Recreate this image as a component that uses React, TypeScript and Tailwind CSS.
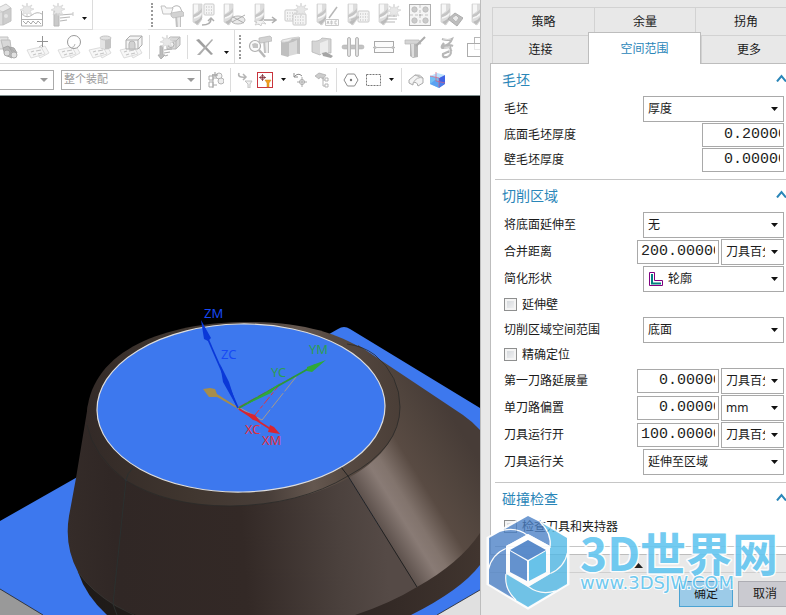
import { useState, type ReactNode } from "react";

const FONT = "font-['Noto_Sans','Noto_Sans_CJK_SC',sans-serif]";

/* ---------- toolbar drawing parts ---------- */

function Mill({ x = 0 }: { x?: number }) {
  return (
    <g transform={`translate(${x} 0)`}>
      <path d="M2 1h9v15l-4 6-5-3z" fill="#cfcfcf" />
      <path d="M3 1h4v7l-4 3z" fill="#f4f4f4" />
      <path d="M11 5v4q-3 4-9 6v-3q6-2 9-7z" fill="#adadad" />
      <path d="M11 12v4l-5 6-3-3q6-2 8-7z" fill="#9f9f9f" />
      <path d="M3 15q5-1 8-5" stroke="#f4f4f4" strokeWidth="1.500" fill="none" />
      <path d="M2 1h9v14M2 1v18l5 3 4-6" stroke="#bdbdbd" strokeWidth=".7" fill="none" />
    </g>
  );
}

function Burst({ x = 0, y = 0 }: { x?: number; y?: number }) {
  return (
    <path
      transform={`translate(${x} ${y})`}
      d="M6 0l1 4 4-2-2 3 4 1-4 2 2 4-4-2-1 3-1-3-4 2 2-4-4-1 4-2-2-3 4 2z"
      fill="#dedede"
      stroke="#bcbcbc"
      strokeWidth=".6"
    />
  );
}

function Cards() {
  return (
    <g stroke="#c4c4c4" strokeWidth=".8">
      <path d="M9 15l10-4 4 7-9 5z" fill="#f2f2f2" />
      <path d="M1 15l14-3 4 7-14 4z" fill="#f4f4f4" />
      <path d="M5 17l3-1M10 16l5-1M7 20l3-1M12 19l4-1" stroke="#adadad" strokeWidth="1.2" />
      <path d="M17 9q-2 2-4 3" stroke="#999" fill="none" />
    </g>
  );
}

function Hammer({ x = 0, y = 0 }: { x?: number; y?: number }) {
  return (
    <g transform={`translate(${x} ${y})`}>
      <path d="M4 4h6v13H5z" fill="#a8a8a8" />
      <path d="M6 4h3v13H7z" fill="#e2e2e2" />
      <path d="M0 2l11-2 2 2v3L2 7 0 5z" fill="#c0c0c0" stroke="#999" strokeWidth=".7" />
    </g>
  );
}

function Calc({ x = 0, y = 0, w = 10, h = 11 }: { x?: number; y?: number; w?: number; h?: number }) {
  return (
    <g transform={`translate(${x} ${y})`}>
      <rect width={w} height={h} rx="1" fill="#f0f0f0" stroke="#b5b5b5" />
      <path d={`M2 3h${w - 3}M2 6h${w - 3}M2 9h${w - 3}`} stroke="#999" strokeDasharray="1 1.500" />
    </g>
  );
}

const glyphs: Record<string, ReactNode> = {
  box: (
    <>
      <path d="M8 6l10-5 5 4-8 4z" fill="#e2e2e2" stroke="#b5b5b5" />
      <path d="M6 9h9v13H6z" fill="#cfcfcf" stroke="#b3b3b3" />
      <path d="M15 9l8-4v13l-8 4z" fill="#b8b8b8" stroke="#a8a8a8" />
      <circle cx="18" cy="13" r="2" fill="#d9d9d9" />
    </>
  ),
  wave: (
    <>
      <path d="M1.5 8v15h21V8M1 16.500h22" fill="none" stroke="#8f8f8f" />
      <path d="M2 11q5 5 10 1t10-1" fill="none" stroke="#999" />
      <path d="M3 18l3 3 2-3 3 3 2-3 3 3 2-3 3 3" fill="none" stroke="#858585" />
      <Burst x={1} y={0} />
    </>
  ),
  comb: (
    <>
      <path d="M3 8h5v15H3z" fill="#b5b5b5" stroke="#999" />
      <path d="M9 12l13-1M9 15l10-1M9 18l7-1" stroke="#999" strokeWidth="1.200" />
      <Burst x={1} y={0} />
      <path d="M22 9v4" stroke="#b2b2b2" />
    </>
  ),
  hammer: (
    <>
      <path d="M1 3h4l1 2h7l-2 6H3z" fill="#f4f4f4" stroke="#aaa" />
      <path d="M12 5q4-4 8-1l3 7" fill="none" stroke="#999" />
      <Hammer x={11} y={8} />
    </>
  ),
  millcalc: (
    <>
      <Mill />
      <Calc x={13} y={1} />
      <path d="M11 22q9 0 9-6m-3 2l3-3 3 3" fill="none" stroke="#8c8c8c" strokeWidth="1.500" />
    </>
  ),
  millplane: (
    <>
      <Mill />
      <ellipse cx="16" cy="17" rx="7" ry="4" fill="#e1e1e1" stroke="#999" />
      <path d="M10 19l13-7M11 14l11 6" stroke="#8c8c8c" />
    </>
  ),
  millarrow: (
    <>
      <Mill />
      <path d="M11 17h12m-4-3l4 3-4 3" fill="none" stroke="#8e8e8e" strokeWidth="1.500" />
      <path d="M1 18l3 1-2 3 4-1 2 2 1-3 4 1-3-3" fill="#eee" stroke="#aaa" strokeWidth=".7" />
    </>
  ),
  calcs: (
    <>
      <Calc x={1} y={7} w={12} h={11} />
      <Calc x={9} y={11} w={13} h={11} />
      <Burst x={11} y={0} />
    </>
  ),
  millabc: (
    <>
      <Mill />
      <path d="M22 4l-8 11" stroke="#999" strokeWidth="1.500" />
      <path d="M10.500 16.500h13v6h-13z" fill="#fafafa" stroke="#b5b5b5" />
      <path d="M12 21l1-3 1 3M16 18h1v3h-1zM22 18h-2v3h2" fill="none" stroke="#999" strokeWidth=".8" />
    </>
  ),
  milltable: (
    <>
      <Mill />
      <Calc x={12} y={8} w={11} h={11} />
      <path d="M5 17l8-3" stroke="#aaa" strokeWidth="2" />
    </>
  ),
  millburst: (
    <>
      <Mill />
      <Burst x={11} y={1} />
      <path d="M10 13h10M9 16h11M8 19h10" stroke="#999" />
    </>
  ),
  holes: (
    <>
      <rect x="1.500" y="1.500" width="21" height="21" fill="#f2f2f2" stroke="#8e8e8e" />
      {[6.500, 17.500].map((cx) =>
        [6.500, 17.500].map((cy) => <circle key={`${cx}-${cy}`} cx={cx} cy={cy} r="2.700" fill="#b4b4b4" stroke="#999" strokeWidth=".7" />)
      )}
      <path d="M12 2v20M2 12h20" stroke="#aaa" strokeDasharray="3 2" />
      <circle cx="12" cy="12" r="1" fill="#999" />
    </>
  ),
  milldiamond: (
    <>
      <Mill />
      <path d="M9 16l7-6 8 5-6 8z" fill="#a2a2a2" stroke="#8a8a8a" />
      <path d="M13 15l4-3 3 3-3 4z" fill="#e1e1e1" stroke="#999" />
    </>
  ),
  mill: <Mill />,
  binoc: (
    <>
      <path d="M4 2h10v12H4z" fill="#d9d9d9" stroke="#a8a8a8" />
      <path d="M7 5h9l1 8h-8z" fill="#c8c8c8" stroke="#a2a2a2" />
      <path d="M9 13l5-2 8 7-4 5-7-3zM15 12l5 1 3 5-3 2z" fill="#999" stroke="#808080" />
      <circle cx="13" cy="18" r="3" fill="#ccc" stroke="#8a8a8a" />
      <circle cx="20" cy="20" r="3" fill="#d5d5d5" stroke="#8a8a8a" />
    </>
  ),
  cardplus: (
    <>
      <Cards />
      <path d="M16.500 1v11M11 6.500h11" stroke="#666" />
    </>
  ),
  cardcircle: (
    <>
      <Cards />
      <circle cx="17" cy="7" r="6.500" fill="#fff" stroke="#6e6e6e" />
      <path d="M18 9q0 3-4 4" fill="none" stroke="#999" />
    </>
  ),
  cardcyl: (
    <>
      <Cards />
      <path d="M12 3v10q5 3 11 0V3z" fill="#aaa" />
      <path d="M12 3h5v11l-5-1z" fill="#dadada" />
      <ellipse cx="17.500" cy="3" rx="5.500" ry="2" fill="#d5d5d5" stroke="#aaa" />
    </>
  ),
  cardbox: (
    <>
      <Cards />
      <path d="M7 5l4-4h12v9l-4 4H7z" fill="#eee" stroke="#8a8a8a" />
      <path d="M7 5h12v9M19 5l4-4" fill="none" stroke="#8a8a8a" />
      <path d="M10 9q0-3 3-3t3 3v5h-6z" fill="#c0c0c0" stroke="#999" />
    </>
  ),
  clamp: (
    <>
      <path d="M10 6l3-4h10v8l-4 4h-9z" fill="#cacaca" stroke="#999" />
      <path d="M10 6h9l4-4M19 6v8" fill="none" stroke="#999" />
      <circle cx="14" cy="9.500" r="3" fill="#ececec" stroke="#8a8a8a" />
      <path d="M3 11h3v9h2l-4 4-3-4h2z" fill="#a2a2a2" stroke="#8f8f8f" />
      <path d="M7 15l8-1M7 18l6-1M8 21l3-1" stroke="#8f8f8f" strokeWidth="1.200" />
      <Burst x={4} y={0} />
    </>
  ),
  cross: (
    <>
      <path d="M3 5l3-1 14 15-2 1z" fill="#777" />
      <path d="M19 4l1 1L7 20H4z" fill="#8c8c8c" />
    </>
  ),
  findhammer: (
    <>
      <Hammer x={11} y={1} />
      <circle cx="7" cy="11" r="5.500" fill="#f8f8f8" stroke="#8e8e8e" strokeWidth="1.200" />
      <path d="M4 9l3-1 3 1v4H5z" fill="#aaa" />
      <path d="M11 15l6 7" stroke="#999" strokeWidth="2.500" />
    </>
  ),
  block: (
    <>
      <path d="M2 7q8 1 11-3l8-1v16q-9-1-12 3l-7-2z" fill="#a5a5a5" />
      <path d="M2 7q8 1 11-3l8-1-1-1-8 1-9 2z" fill="#e2e2e2" stroke="#999" strokeWidth=".6" />
      <path d="M10 8q5-1 8-3v14l-8 2z" fill="#cacaca" />
    </>
  ),
  blockmill: (
    <>
      <path d="M2 6q7 1 10-3l9 1v14q-9-1-11 2l-8-3z" fill="#c4c4c4" stroke="#999" strokeWidth=".8" />
      <path d="M10 8l8-3v13l-8 1z" fill="#e4e4e4" />
      <path d="M12 18l4-1 7 4-2 2-8-2z" fill="#808080" />
    </>
  ),
  gates: (
    <>
      <rect x="1" y="10" width="22" height="4" rx="2" fill="#aaa" stroke="#8a8a8a" strokeWidth=".5" />
      <rect x="6.500" y="2.500" width="3" height="19" rx="1.500" fill="#d2d2d2" stroke="#999" />
      <rect x="14.500" y="2.500" width="3" height="19" rx="1.500" fill="#d2d2d2" stroke="#999" />
    </>
  ),
  slot: (
    <>
      <rect x="2.500" y="6.500" width="19" height="11" fill="#fafafa" stroke="#858585" />
      <path d="M1 12.500h22" stroke="#999" />
      <circle cx="3" cy="12.500" r="1.500" fill="#a4a4a4" />
      <circle cx="21" cy="12.500" r="1.500" fill="#a4a4a4" />
    </>
  ),
  toolpen: (
    <>
      <path d="M2 5h14l2 4H2z" fill="#c4c4c4" stroke="#999" strokeWidth=".7" />
      <path d="M7 9h8v13l-5 1-3-2z" fill="#999" />
      <path d="M8 9h3v13H9z" fill="#cfcfcf" />
      <path d="M22 2l-9 9" stroke="#888" strokeWidth="2" />
    </>
  ),
  squiggle: (
    <>
      <path d="M8 4q6 2 10 0-2 6-9 7 6-2 10 0M10 8q-4 5-1 5l7-1q3 8-3 10-5 1-4-3l9-4" fill="none" stroke="#999" strokeWidth="2.200" />
      <path d="M9 4q5 1 8 0M10 13l6-1M15 14q2 5-2 7" fill="none" stroke="#ddd" strokeWidth=".8" />
    </>
  ),
  squares: (
    <>
      <rect x="9.500" y="2.500" width="15" height="12" fill="#fff" stroke="#999" />
      <rect x="2.500" y="8.500" width="13" height="13" fill="#fff" fillOpacity=".7" stroke="#8a8a8a" />
    </>
  ),
};

const smallGlyphs: Record<string, ReactNode> = {
  assembly: (
    <>
      <path d="M1 4h4v4H1zM1 10h4v5H1zM5 2v14M5 6h5M5 13h4" fill="none" stroke="#aaa" />
      <circle cx="11" cy="4" r="3" fill="#f4f4f4" stroke="#b5b5b5" />
      <circle cx="13" cy="9" r="3" fill="#eee" stroke="#b5b5b5" />
      <path d="M7 0v5M4 3h6" stroke="#999" />
    </>
  ),
  unfilter: (
    <>
      <path d="M2 1q-2 5 7 4M6 2l3 3-3 3" fill="none" stroke="#b5b5b5" strokeWidth="1.500" />
      <path d="M8 9h7l-2 3v4h-2v-4z" fill="#f1f1f1" stroke="#c2c2c2" />
    </>
  ),
  redfilter: (
    <>
      <rect x=".5" y=".5" width="15" height="15" fill="#fff" stroke="#c9333c" />
      <circle cx="5.500" cy="5.500" r="2" fill="none" stroke="#822d38" strokeWidth=".8" />
      <path d="M5.500 2v7M2 5.500h7" stroke="#822d38" strokeWidth=".8" />
      <path d="M8 8h6l-2 3v4h-2v-4z" fill="#f4a01c" stroke="#c98318" strokeWidth=".5" />
    </>
  ),
  turn: (
    <>
      <path d="M2 5q4-5 8-1M2 1v4h4" fill="none" stroke="#8b8b8b" />
      <circle cx="10" cy="10" r="2.500" fill="none" stroke="#aaa" />
      <path d="M10 5v10M5 10h10" stroke="#aaa" />
    </>
  ),
  tree: (
    <>
      <path d="M1 4l4-3 7 2-3 4-3-2-1 2z" fill="#ccc" stroke="#aaa" strokeWidth=".7" />
      <path d="M11 6h3v3h-3zM11 12h3v3h-3zM9 5v9h2M9 8h2" fill="none" stroke="#b5b5b5" />
    </>
  ),
  hex: (
    <>
      <path d="M4.500 2h7L15 8l-3.500 6h-7L1 8z" fill="none" stroke="#8c8c8c" />
      <circle cx="8" cy="8" r="1.200" fill="#777" />
    </>
  ),
  marquee: <rect x="1.500" y="2.500" width="14" height="11" fill="none" stroke="#777" strokeDasharray="2 1" />,
  shell: (
    <>
      <path d="M1 8l6-5q5-1 8 3v5l-5 3q-1-5-5-3v2l-4-2z" fill="#f4f4f4" stroke="#aaa" />
      <path d="M5 11q4-7 10-5M7 3l5 2" fill="none" stroke="#b5b5b5" />
    </>
  ),
  cube: (
    <>
      <path d="M0 4l7-3 8 2-6 3z" fill="#b9e2ff" />
      <path d="M0 4l9 2v10l-9-4z" fill="#74bff5" />
      <path d="M9 6l6-3v9l-6 4z" fill="#3f63e4" />
      <path d="M0 12l5-4 10 3-6 5z" fill="#4b8ff0" opacity=".6" />
      <path d="M6 0v9M6 9l9 2M0 4l9 2v9" fill="none" stroke="#d8607e" strokeWidth=".7" />
    </>
  ),
};

function Tool({ name, className = "w-[31px] justify-center" }: { name: string; className?: string }) {
  return (
    <button type="button" aria-label={name} className={`flex h-7 shrink-0 items-center ${className}`}>
      <svg viewBox="0 0 24 24" className="size-6 shrink-0 opacity-70">{glyphs[name]}</svg>
    </button>
  );
}

function SmallTool({ name }: { name: string }) {
  return (
    <button type="button" aria-label={name} className="size-4 shrink-0">
      <svg viewBox="0 0 16 16" className="size-4">{smallGlyphs[name]}</svg>
    </button>
  );
}

function MoreArrow() {
  return (
    <button type="button" aria-label="more" className="flex w-3 shrink-0 justify-center">
      <svg viewBox="0 0 5 3" className="h-[3px] w-[5px]">
        <path d="M0 0h5L2.500 3z" fill="#111" />
      </svg>
    </button>
  );
}

const Divider = ({ className = "h-6" }: { className?: string }) => (
  <span className={`w-px shrink-0 bg-[#dcdcdc] ${className}`} />
);

const Grip = () => <span className="h-6 w-0 shrink-0 border-l-2 border-dotted border-[#9a9a9a]" />;

/* ---------- left side ---------- */

function Toolbars() {
  return (
    <div className="bg-white">
      <div className="flex h-[30px] overflow-hidden">
        <div className="flex w-[93px] shrink-0 items-center border-r border-b border-[#dcdcdc]">
          <Tool name="box" className="w-4 justify-end pr-1" />
          <Tool name="wave" />
          <Tool name="comb" />
          <div className="pt-2">
            <MoreArrow />
          </div>
        </div>
        <div className="w-[55px] shrink-0 border-b border-[#f4f4f4]" />
        <div className="flex min-w-0 flex-1 items-center overflow-hidden border-b border-[#dcdcdc] pl-[3px]">
          <Grip />
          <span className="w-[3px] shrink-0" />
          {["hammer", "millcalc", "millplane", "millarrow", "calcs", "millabc", "milltable", "millburst", "holes", "milldiamond", "mill"].map((n) => (
            <Tool key={n} name={n} />
          ))}
        </div>
      </div>
      <div className="flex h-[34px] items-center overflow-hidden border-b border-[#dcdcdc]">
        <Tool name="binoc" className="w-[22px] justify-end pr-1" />
        {["cardplus", "cardcircle", "cardcyl", "cardbox"].map((n) => (
          <Tool key={n} name={n} />
        ))}
        <Divider className="mx-[3px] h-6" />
        <Tool name="clamp" />
        <Divider className="mr-px ml-[3px] h-6" />
        <Tool name="cross" />
        <div className="pt-3">
          <MoreArrow />
        </div>
        <Divider className="mr-1 ml-0.5 h-full" />
        <Grip />
        <span className="w-[3px] shrink-0" />
        {["findhammer", "block", "blockmill", "gates", "slot", "toolpen", "squiggle", "squares"].map((n) => (
          <Tool key={n} name={n} />
        ))}
      </div>
      <div className="flex h-8 items-center overflow-hidden border-b border-[#7f8f8f]">
        <ToolbarSelect label="filter" className="w-[54px] border-l-0" />
        <span className="w-[7px] shrink-0" />
        <ToolbarSelect label="scope" value="整个装配" className="w-[140px]" />
        <div className="flex items-center gap-1.5 pl-[7px]">
          <SmallTool name="assembly" />
          <Divider />
          <SmallTool name="unfilter" />
        </div>
        <div className="flex items-center gap-1 pl-1">
          <SmallTool name="redfilter" />
          <MoreArrow />
        </div>
        <div className="flex items-center gap-1.5 pl-[3px]">
          <SmallTool name="turn" />
          <SmallTool name="tree" />
          <Divider />
          <SmallTool name="hex" />
        </div>
        <div className="flex items-center gap-1 pl-1.5">
          <SmallTool name="marquee" />
          <MoreArrow />
          <Divider />
        </div>
        <div className="flex items-center gap-1.5 pl-1.5">
          <SmallTool name="shell" />
          <SmallTool name="cube" />
        </div>
      </div>
    </div>
  );
}

function ToolbarSelect({ label, value = "", className }: { label: string; value?: string; className: string }) {
  return (
    <div className={`grid h-5 shrink-0 items-center border border-[#aaa] bg-white ${className}`}>
      <select aria-label={label} className="col-start-1 row-start-1 h-full w-full appearance-none px-0.5 text-[11px] text-[#9a9a9a] outline-none">
        <option>{value}</option>
      </select>
      <svg viewBox="0 0 8 4" className="pointer-events-none col-start-1 row-start-1 mr-[5px] h-1 w-2 justify-self-end">
        <path d="M0 0h8L4 4z" fill="#999" />
      </svg>
    </div>
  );
}

function Viewport() {
  return (
    <div className="min-h-0 flex-1 bg-black">
      <svg viewBox="0 96 480 519" preserveAspectRatio="xMidYMid slice" className="block h-full w-full">
        <defs>
          <linearGradient id="front" gradientUnits="userSpaceOnUse" x1="68" y1="540" x2="385" y2="520">
            <stop offset="0" stopColor="#352c29" />
            <stop offset=".15" stopColor="#302725" />
            <stop offset=".55" stopColor="#332926" />
            <stop offset=".85" stopColor="#4b413d" />
            <stop offset="1" stopColor="#554a46" />
          </linearGradient>
          <linearGradient id="side" gradientUnits="userSpaceOnUse" x1="348" y1="476" x2="450" y2="413">
            <stop offset="0" stopColor="#5d514c" />
            <stop offset=".2" stopColor="#897b75" />
            <stop offset=".3" stopColor="#82746d" />
            <stop offset=".5" stopColor="#594b43" />
            <stop offset=".75" stopColor="#50443d" />
            <stop offset="1" stopColor="#473c37" />
          </linearGradient>
          <linearGradient id="rim" gradientUnits="userSpaceOnUse" x1="88" y1="430" x2="400" y2="400">
            <stop offset="0" stopColor="#332a27" />
            <stop offset=".3" stopColor="#40362f" />
            <stop offset=".55" stopColor="#483e39" />
            <stop offset=".7" stopColor="#64574f" />
            <stop offset=".8" stopColor="#574a42" />
            <stop offset="1" stopColor="#4a3e37" />
          </linearGradient>
          <linearGradient id="skirt" x1="0" x2="1">
            <stop offset="0" stopColor="#1e1a18" />
            <stop offset=".6" stopColor="#29211f" />
            <stop offset="1" stopColor="#41352f" />
          </linearGradient>
        </defs>

        {/* base plate */}
        <path d="M0 588l45 27H0z" fill="#999" />
        <path d="M480 589l-45 26h45z" fill="#e0e0e0" />
        <path d="M0 521L338 329q6-4 12 0l130 79v182l-43 25H43L0 589z" fill="#3d78ee" />
        <path d="M0 589l43 26M437 615l43-25" stroke="#222" strokeWidth=".8" />

        {/* boss */}
        <path d="M78 572q8 24 29 43h304q50-25 69-50v-35H78z" fill="url(#skirt)" />
        <path
          d="M88 405L76 478q-4 22-7 38-5 30 9 56 13 19 38 34l20 9h219q36-12 62-28l-69-111Q250 525 125 480z"
          fill="url(#front)"
        />
        <path d="M348 476l69 111q43-24 63-54V430q-7-8-17-15L358 345z" fill="url(#side)" />
        <path
          d="M87 412C92 350 165 322 248 322c56 0 90 12 115 27 26 16 37 34 37 58 0 62-90 99-170 99-50 0-90-12-115-34-20-18-28-36-28-60z"
          fill="url(#rim)"
        />
        <path
          d="M87 425q6 30 38 55 42 26 105 26 70-1 118-30 52-28 52-69 0-31-25-52-12-9-28-11"
          fill="none"
          stroke="#2a2a28"
          strokeWidth=".8"
        />
        <path d="M78 572q13 19 38 34l18 9" fill="none" stroke="#3b3b38" strokeWidth=".7" />
        <path d="M133 468q-6 5-7 12l-13 124 4 11" fill="none" stroke="#2b302f" />
        <path d="M341 467l7 9 69 111" fill="none" stroke="#222" />
        <ellipse cx="241" cy="408" rx="144" ry="84" transform="rotate(-1 241 408)" fill="#3d78ee" stroke="#ddd" strokeWidth="1.2" />

        {/* coordinate axes */}
        <g strokeLinecap="round">
          <path d="M239 407l56-31" stroke="#c23c4c" strokeDasharray="8 3" />
          <path d="M280 384l-25 31" stroke="#e8303c" strokeDasharray="8 3 3 3" />
          <path d="M296 377l-34 43-22-12" stroke="#a59a8c" fill="none" strokeDasharray="18 3" />
        </g>
        <path d="M240 410l-1-2-22-14-2-5-5-1-7 1 6 8 8 0z" fill="#a68d4c" />
        <path d="M238 408l-34-78" stroke="#0a38d8" strokeWidth="1.800" />
        <path d="M201 320l10 18-3 3-4-2zM220 364l9 18 8 25-14-25z" fill="#0a38d8" />
        <path d="M239 408l76-43" stroke="#2a9a3a" strokeWidth="1.800" />
        <path d="M326 360l-14 12-5-1v-4zM280 383l-9 10-30 14 29-17z" fill="#2fa83a" />
        <path d="M239 409l33 21" stroke="#d92530" strokeWidth="1.800" />
        <path d="M280 434l-12-2 2-7 4 2zM243 411l12 4 5 6-7-1z" fill="#d92530" />
        <g className="font-['Noto_Sans',sans-serif] text-[13px]">
          <text x="204" y="318" fill="#1749f5">ZM</text>
          <text x="221" y="359" fill="#1749f5">ZC</text>
          <text x="309" y="354" fill="#2c9d55">YM</text>
          <text x="271" y="377" fill="#2c9d55">YC</text>
          <text x="245" y="434" fill="#e0303e">XC</text>
          <text x="262" y="445" fill="#e0303e">XM</text>
        </g>
      </svg>
    </div>
  );
}

/* ---------- dialog ---------- */

function Select({ id, options, className = "w-[141px]", icon }: { id: string; options: string[]; className?: string; icon?: ReactNode }) {
  return (
    <div className={`grid h-[26px] shrink-0 items-center border border-[#a9a9a9] bg-white ${className}`}>
      <select
        id={id}
        className={`col-start-1 row-start-1 h-full w-full appearance-none pr-[18px] text-xs text-[#1a1a1a] outline-none ${icon ? "pl-6" : "pl-1"}`}
      >
        {options.map((o) => (
          <option key={o}>{o}</option>
        ))}
      </select>
      {icon}
      <svg viewBox="0 0 7 4" className="pointer-events-none col-start-1 row-start-1 mr-[5px] h-1 w-[7px] justify-self-end">
        <path d="M0 0h7L3.500 4z" fill="#111" />
      </svg>
    </div>
  );
}

function NumberBox({ id, value }: { id: string; value: string }) {
  const [text, setText] = useState(value);
  return (
    <input
      id={id}
      value={text}
      onChange={(e) => setText(e.target.value)}
      className={`h-6 w-[82px] shrink-0 border border-[#a9a9a9] bg-white pr-[3px] font-['Liberation_Mono',monospace] text-[15px] text-[#222] outline-none ${
        value.length > 7 ? "pl-[3px]" : "pl-[21px]"
      }`}
    />
  );
}

function Row({ id, label, height = "h-[27px]", children }: { id: string; label: string; height?: string; children: ReactNode }) {
  return (
    <div className={`flex items-center gap-0.5 pr-0.5 pl-[13px] ${height}`}>
      <label htmlFor={id} className="flex-1 whitespace-nowrap">{label}</label>
      {children}
    </div>
  );
}

function CheckRow({ id, label }: { id: string; label: string }) {
  return (
    <div className="flex h-[25px] items-center gap-[5px] pl-[13px]">
      <input
        id={id}
        type="checkbox"
        className="size-[13px] appearance-none border border-[#8e8f8f] bg-linear-to-br from-[#cfd3d8] to-[#f6f6f6] ring-2 ring-[#f4f4f4] ring-inset"
      />
      <label htmlFor={id}>{label}</label>
    </div>
  );
}

function Section({ title, children }: { title: string; children: ReactNode }) {
  return (
    <section className="pb-[7px]">
      <h2>
        <button type="button" className="flex h-[31px] w-full items-center justify-between pl-[11px] text-sm text-[#2a86b8]">
          {title}
          <svg viewBox="0 0 10 8" className="mb-1 h-2 w-2.5">
            <path d="M1 7.500L5.500 2 10 7.500" fill="none" stroke="#2a86b8" strokeWidth="2" />
          </svg>
        </button>
      </h2>
      {children}
    </section>
  );
}

const Rule = () => <hr className="ml-1 border-[#c6c6c6]" />;

const outline = (
  <svg viewBox="0 0 14 14" className="pointer-events-none col-start-1 row-start-1 ml-[5px] size-3.5">
    <path d="M.5.500h5v8h8v5H.5z" fill="#fff" stroke="#800080" />
    <path d="M3 2v9.500h9" fill="none" stroke="#008080" strokeWidth="2" />
  </svg>
);

function Tab({ label, className, active }: { label: string; className: string; active?: boolean }) {
  return (
    <button
      type="button"
      role="tab"
      aria-selected={!!active}
      className={`shrink-0 border-t ${
        active ? "z-10 -mt-[3px] -mb-px border-x border-[#bdbdbd] bg-white text-[#2a86b8]" : "border-l border-[#d2d2d2] bg-[#e8e8e8]"
      } ${className}`}
    >
      {label}
    </button>
  );
}

function Watermark() {
  return (
    <svg viewBox="0 0 300 100" className="pointer-events-none absolute bottom-0 left-[5px] h-[100px] w-[300px] overflow-visible">
      <path d="M42 0L82 23v46L42 93 2 69V23z" fill="none" stroke="#fff" strokeWidth="3" opacity=".85" />
      <g opacity=".78">
        <path d="M54 7L81 23v46L42 92 30 85Q18 75 20 58l22 14 22-13V31Q66 18 54 7z" fill="#4fb8e6" />
        <path d="M54 7Q66 18 64 31L42 19 20 31v27q-2 17 10 27L3 69V23L42 1z" fill="#4a80c6" />
        <g fill="none" stroke="#fff" strokeWidth="1.200">
          {[0, 60, 120, 180, 240, 300].map((a) => (
            <path key={a} d="M54 7Q66 18 64 33" transform={`rotate(${a} 42 46)`} />
          ))}
        </g>
      </g>
      <path d="M42 19l22 12v28L42 72 20 59V31z" fill="#fff" opacity=".85" />
      <g opacity=".85">
        <path d="M42 25l18 10-18 10-18-10z" fill="#3f78c2" />
        <path d="M24 36l17 10v20L24 57z" fill="#4a80c6" />
        <path d="M60 36L43 46v20l17-9z" fill="#4fb8e6" />
      </g>
      <g fill="#64c6f0" stroke="#fff" strokeWidth="3" paintOrder="stroke" strokeLinejoin="round" opacity=".9">
        <text x="94" y="56" className="font-['Noto_Sans_CJK_SC',sans-serif] text-[46px] font-bold">3D世界网</text>
        <text x="94" y="74" strokeWidth="2" className="font-['DejaVu_Sans',sans-serif] text-[18px]">www.3DSJW.COM</text>
      </g>
    </svg>
  );
}

function Dialog() {
  const units = ["刀具百分比", "mm"];
  return (
    <aside className="relative flex w-[306px] shrink-0 flex-col overflow-hidden border-l border-[#bdbdbd] bg-[#e8e8e8] pt-[7px] pl-[9px] text-xs text-[#1a1a1a]">
      <div role="tablist" className="pl-[2px]">
        <div className="flex h-7">
          <Tab label="策略" className="w-[102px]" />
          <Tab label="余量" className="w-[101px]" />
          <Tab label="拐角" className="w-[101px]" />
        </div>
        <div className="flex h-7">
          <Tab label="连接" className="w-[96px]" />
          <Tab label="空间范围" className="w-[113px]" active />
          <Tab label="更多" className="w-[95px]" />
        </div>
      </div>

      <div className="border-t border-b border-l border-[#bdbdbd] bg-white pb-[7px]">
        <Section title="毛坯">
          <Row id="blank" label="毛坯">
            <Select id="blank" options={["厚度"]} />
          </Row>
          <Row id="floor" label="底面毛坯厚度" height="h-[25px]">
            <NumberBox id="floor" value="0.20000" />
          </Row>
          <Row id="wall" label="壁毛坯厚度" height="h-[25px]">
            <NumberBox id="wall" value="0.00000" />
          </Row>
        </Section>
        <Rule />
        <Section title="切削区域">
          <Row id="extend" label="将底面延伸至">
            <Select id="extend" options={["无"]} />
          </Row>
          <Row id="merge" label="合并距离">
            <NumberBox id="merge" value="200.00000" />
            <Select id="mergeUnit" options={units} className="w-[63px]" />
          </Row>
          <Row id="shape" label="简化形状">
            <Select id="shape" options={["轮廓"]} icon={outline} />
          </Row>
          <CheckRow id="extendWall" label="延伸壁" />
          <Row id="range" label="切削区域空间范围" height="h-[25px]">
            <Select id="range" options={["底面"]} />
          </Row>
          <CheckRow id="exact" label="精确定位" />
          <Row id="first" label="第一刀路延展量">
            <NumberBox id="first" value="0.00000" />
            <Select id="firstUnit" options={units} className="w-[63px]" />
          </Row>
          <Row id="offset" label="单刀路偏置">
            <NumberBox id="offset" value="0.00000" />
            <Select id="offsetUnit" options={["mm"]} className="w-[63px]" />
          </Row>
          <Row id="runOn" label="刀具运行开">
            <NumberBox id="runOn" value="100.00000" />
            <Select id="runOnUnit" options={units} className="w-[63px]" />
          </Row>
          <Row id="runOff" label="刀具运行关">
            <Select id="runOff" options={["延伸至区域"]} />
          </Row>
        </Section>
        <Rule />
        <Section title="碰撞检查">
          <CheckRow id="holder" label="检查刀具和夹持器" />
        </Section>
        <Rule />
      </div>

      <button type="button" aria-label="collapse" className="flex h-[18px] shrink-0 items-center justify-center border-b border-[#cfcfcf] pt-1">
        <svg viewBox="0 0 9 5" className="h-[5px] w-[9px]">
          <path d="M4.500 0L9 5H0z" fill="#222" />
        </svg>
      </button>
      <div className="flex shrink-0 gap-[5px] py-2 pl-[189px]">
        <button type="button" className="h-[26px] w-[54px] shrink-0 border border-[#4ba3d3] bg-[#9ccbe8]">确定</button>
        <button type="button" className="h-[26px] w-[54px] shrink-0 border border-[#adadb3] bg-[#cacad0]">取消</button>
      </div>
      <Watermark />
    </aside>
  );
}

export default function App() {
  return (
    <div className={`flex h-screen overflow-hidden ${FONT}`}>
      <main className="flex min-w-0 flex-1 flex-col">
        <Toolbars />
        <Viewport />
      </main>
      <Dialog />
    </div>
  );
}
